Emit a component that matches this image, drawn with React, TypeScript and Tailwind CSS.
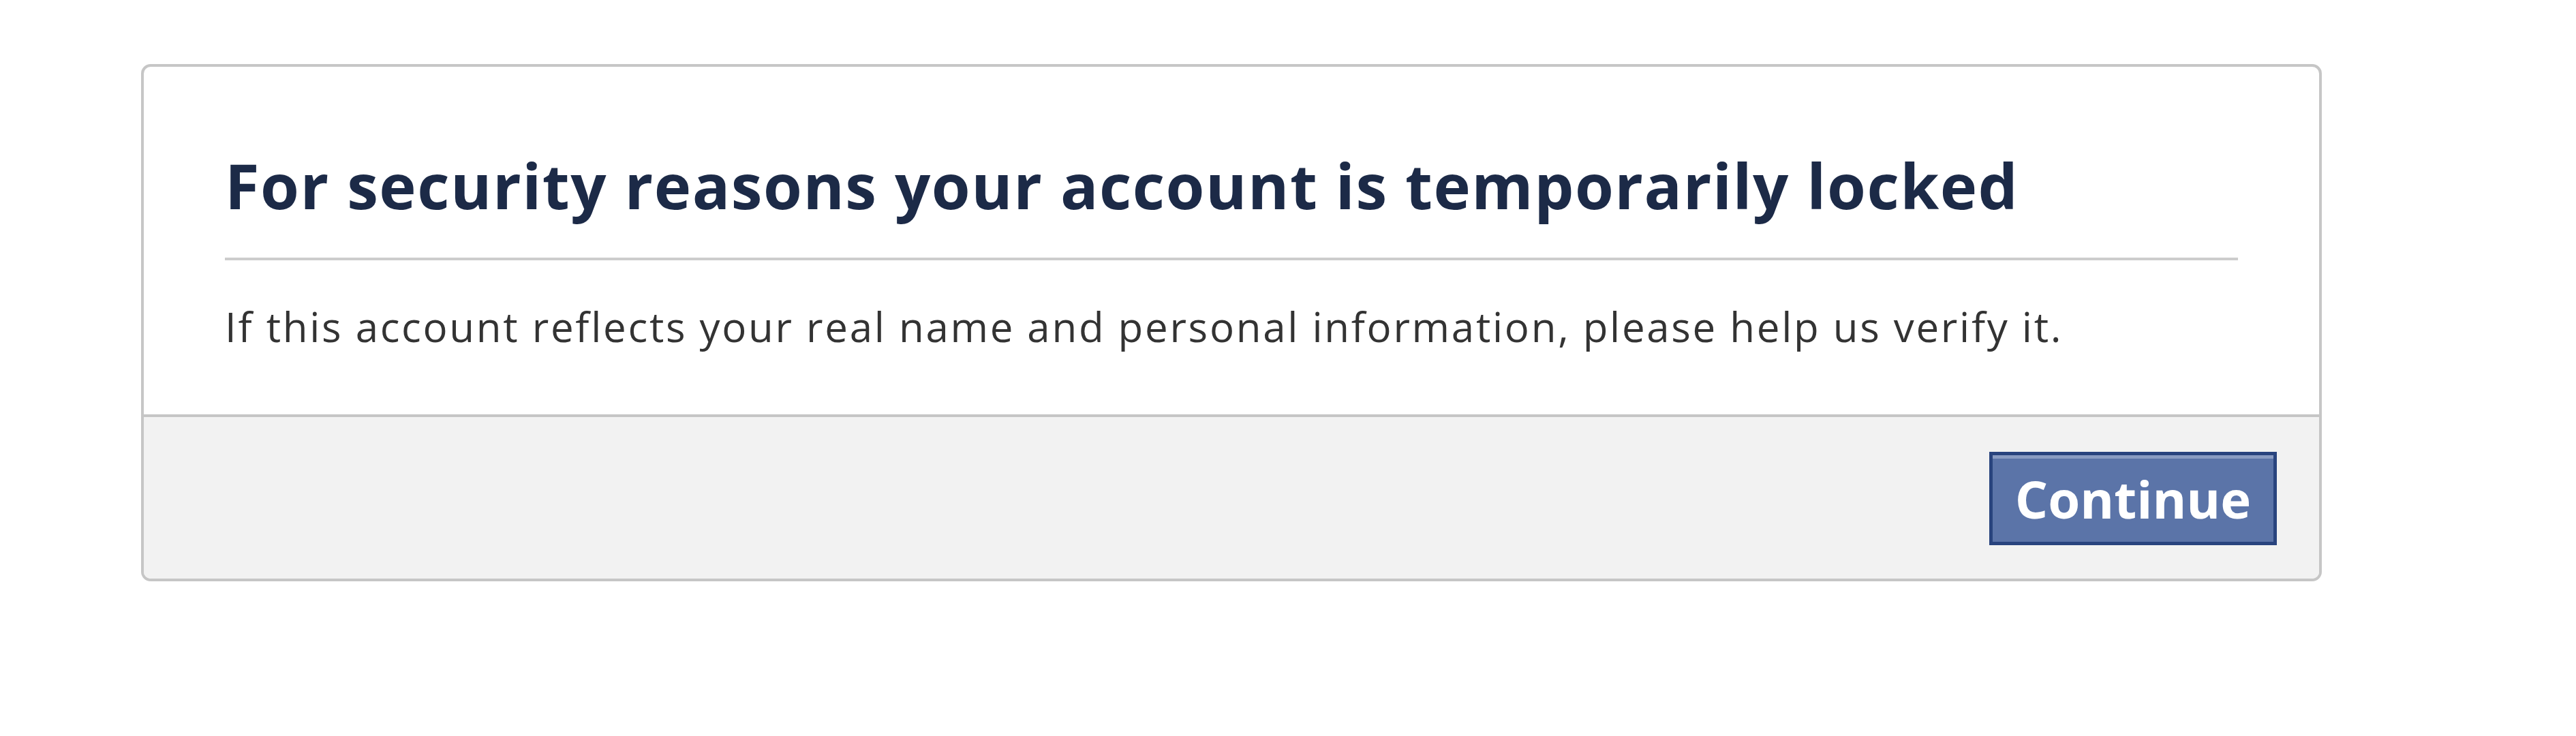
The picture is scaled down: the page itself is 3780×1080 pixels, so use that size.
export default function App() {
  return (
    <div className="min-h-[1080px] w-[3780px] bg-white pt-[94px] pl-[207px] font-['Open_Sans','Noto_Sans',sans-serif]">
      <div className="w-[3200px] overflow-hidden rounded-[14px] border-4 border-[#c6c6c6] bg-white">
        <div className="px-[119px] pt-[128px] pb-[99px]">
          <h1 className="border-b-4 border-[#cccccc] pb-[60px] text-[92px] font-bold leading-[92px] tracking-[1.5px] text-[#1c2a47]">
            For security reasons your account is temporarily locked
          </h1>
          <p className="mt-[67px] text-[60px] leading-[60px] tracking-[2.7px] text-[#333333]">
            If this account reflects your real name and personal information, please help us verify it.
          </p>
        </div>
        <div className="flex justify-end border-t-4 border-[#c6c6c6] bg-[#f2f2f2] pt-[51px] pb-[49px] pr-[62px]">
          <button className="flex h-[137px] w-[422px] items-center justify-center border-[5px] border-[#29447e] bg-[#5b74a8] text-[76px] font-bold leading-none text-white shadow-[inset_0_5px_0_#8a9cc2]">
            Continue
          </button>
        </div>
      </div>
    </div>
  )
}
